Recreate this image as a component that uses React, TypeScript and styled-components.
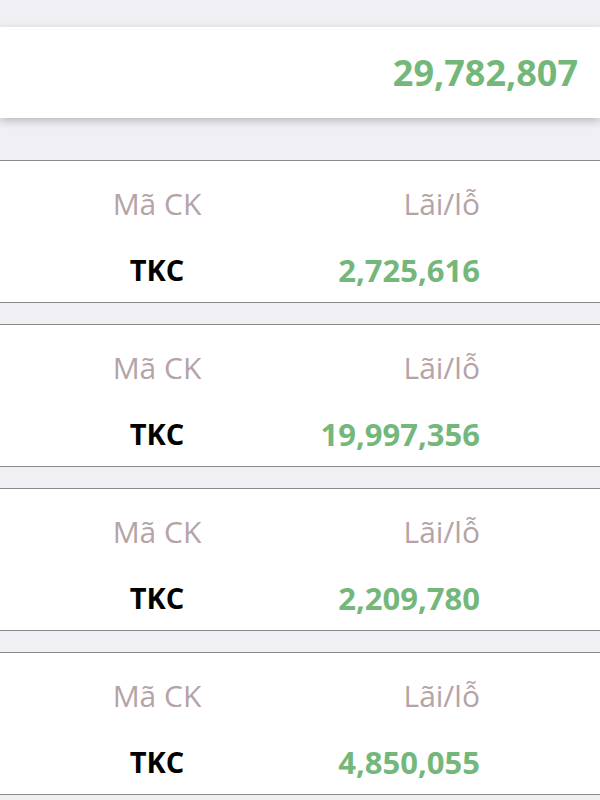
import React from "react";
import styled, { createGlobalStyle } from "styled-components";

const Global = createGlobalStyle`
  html, body { margin: 0; padding: 0; background: #efeff4; }
  body { font-family: "Open Sans", "Liberation Sans", sans-serif; }
`;

const Page = styled.div`
  display: flex;
  flex-direction: column;
  padding-top: 27px;
`;

const TotalCard = styled.div`
  flex-shrink: 0;
  height: 91px;
  background: #ffffff;
  display: flex;
  align-items: center;
  justify-content: flex-end;
  padding-right: 22px;
  box-shadow: 0 3px 8px rgba(0, 0, 0, 0.22);
  margin-bottom: 42px;
`;

const TotalValue = styled.span`
  font-size: 36px;
  font-weight: 700;
  color: #73b87a;
  line-height: 40px;
`;

const List = styled.div`
  display: flex;
  flex-direction: column;
  gap: 21px;
`;

const Card = styled.div`
  flex-shrink: 0;
  background: #ffffff;
  border-top: 1px solid #8a8a8a;
  border-bottom: 1px solid #8a8a8a;
  height: 143px;
  box-sizing: border-box;
  display: grid;
  grid-template-columns: 314px 166px;
  grid-template-rows: 40px 40px;
  row-gap: 26px;
  padding-top: 23px;
`;

const Cell = styled.div<{ $align: "center" | "right" }>`
  text-align: ${(p) => p.$align};
  line-height: 40px;
  white-space: nowrap;
`;

const Label = styled(Cell)`
  font-size: 30px;
  font-weight: 400;
  color: #b5a3a7;
`;

const Code = styled(Cell)`
  font-size: 29px;
  font-weight: 700;
  color: #000000;
`;

const Amount = styled(Cell)`
  font-size: 31px;
  font-weight: 700;
  color: #73b87a;
`;

const rows = [
  { code: "TKC", pl: "2,725,616" },
  { code: "TKC", pl: "19,997,356" },
  { code: "TKC", pl: "2,209,780" },
  { code: "TKC", pl: "4,850,055" },
];

export default function App() {
  return (
    <>
      <Global />
      <Page>
        <TotalCard>
          <TotalValue>29,782,807</TotalValue>
        </TotalCard>
        <List>
          {rows.map((r, i) => (
            <Card key={i}>
              <Label $align="center">Mã CK</Label>
              <Label $align="right">Lãi/lỗ</Label>
              <Code $align="center">{r.code}</Code>
              <Amount $align="right">{r.pl}</Amount>
            </Card>
          ))}
        </List>
      </Page>
    </>
  );
}
